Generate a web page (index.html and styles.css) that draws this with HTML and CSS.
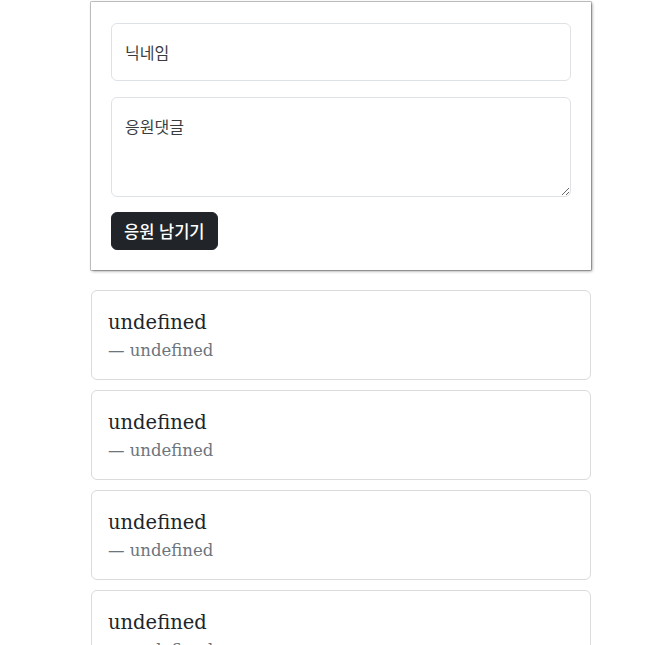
FILE: index.html
```html
<!DOCTYPE html>
<html lang="ko">
<head>
<meta charset="utf-8">
<title>응원</title>
<link rel="stylesheet" href="styles.css">
</head>
<body>
<div class="page">
  <main class="column">
    <form class="form-card">
      <input class="field" type="text" placeholder="닉네임">
      <textarea class="field area" placeholder="응원댓글"></textarea>
      <div class="actions"><button type="button" class="btn">응원 남기기</button></div>
    </form>
    <div class="list">
      <div class="card"><blockquote class="quote">undefined</blockquote><div class="footer">— undefined</div></div>
      <div class="card"><blockquote class="quote">undefined</blockquote><div class="footer">— undefined</div></div>
      <div class="card"><blockquote class="quote">undefined</blockquote><div class="footer">— undefined</div></div>
      <div class="card"><blockquote class="quote">undefined</blockquote><div class="footer">— undefined</div></div>
    </div>
  </main>
</div>
</body>
</html>
```

FILE: styles.css
```css
html, body {
  margin: 0;
  padding: 0;
  background: #fff;
  color: #212529;
  font-family: "Noto Sans CJK KR", "Noto Sans", sans-serif;
}
.page {
  display: flex;
  padding: 2px 0 0 91px;
}
.column {
  width: 500px;
  display: flex;
  flex-direction: column;
  gap: 20px;
}
.form-card {
  box-sizing: border-box;
  width: 500px;
  padding: 21px 20px 20px;
  background: #fff;
  box-shadow: 0 0 0 0.6px rgba(0, 0, 0, 0.35), 1px 1px 3px rgba(0, 0, 0, 0.45);
  display: flex;
  flex-direction: column;
  gap: 16px;
}
.field {
  box-sizing: border-box;
  display: block;
  width: 100%;
  height: 58px;
  margin: 0;
  padding: 0 13px;
  border: 1px solid #dee2e6;
  border-radius: 6px;
  font-family: "Noto Sans CJK KR", sans-serif;
  font-size: 16px;
  line-height: 24px;
  color: #212529;
  background: #fff;
  outline: none;
}
.field::placeholder {
  color: #3a3d40;
  opacity: 1;
}
.area {
  height: 100px;
  padding: 16px 13px;
  resize: vertical;
}
.actions {
  margin-top: -1px;
}
.btn {
  box-sizing: border-box;
  height: 38px;
  padding: 0 12px;
  border: 1px solid #212529;
  border-radius: 6px;
  background: #212529;
  color: #fff;
  font-family: "Noto Sans CJK KR", sans-serif;
  font-size: 16.5px;
  font-weight: 500;
  line-height: 24px;
  cursor: pointer;
}
.list {
  display: flex;
  flex-direction: column;
  gap: 10px;
}
.card {
  box-sizing: border-box;
  height: 90px;
  border: 1px solid #dadbdc;
  border-radius: 6px;
  padding: 17px 16px 15px;
  font-family: "DejaVu Serif", "Liberation Serif", serif;
}
.quote {
  margin: 0;
  font-size: 19.5px;
  line-height: 30px;
  color: #212529;
}
.footer {
  font-size: 16.5px;
  line-height: 26px;
  color: #6c757d;
}
```
